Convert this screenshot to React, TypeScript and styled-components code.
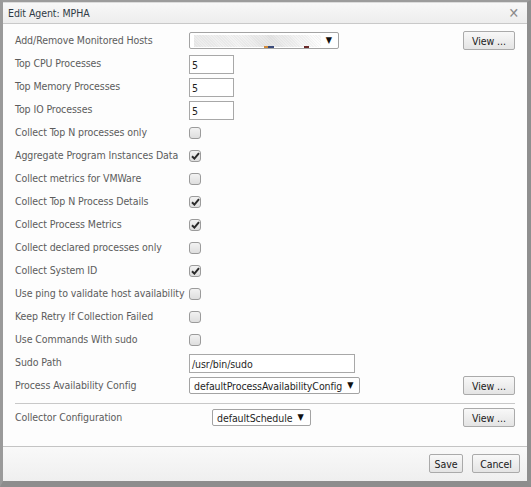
import React from "react";
import styled, { createGlobalStyle } from "styled-components";

const Global = createGlobalStyle`
  html, body { margin: 0; padding: 0; background: #ffffff; }
  * { box-sizing: border-box; }
`;

const FONT = `"DejaVu Sans Condensed", "DejaVu Sans", "Liberation Sans", sans-serif`;

const Dialog = styled.div`
  width: 531px;
  height: 487px;
  display: flex;
  flex-direction: column;
  border-top: 2px solid #9c9c9c;
  border-left: 3px solid #9a9a9a;
  border-right: 4px solid #8f8f8f;
  border-bottom: 6px solid #8d8d8d;
  background: #fdfdfd;
  font-family: ${FONT};
  font-size: 10.5px;
  letter-spacing: -0.08px;
`;

const TitleBar = styled.div`
  height: 22px;
  flex: none;
  display: flex;
  align-items: center;
  justify-content: space-between;
  padding: 0 8px 0 5px;
  background: linear-gradient(#f8f8f8, #ededed);
  border-bottom: 1px solid #c9c9c9;
  border-top: 1px solid #dcdcdc;
  color: #2f3a45;
`;

const Close = styled.span`
  color: #8a8a8a;
  font-size: 14px;
  line-height: 1;
  margin-top: -1px;
`;

const Body = styled.div`
  flex: 1;
  padding: 5px 12px 0 12px;
  display: flex;
  flex-direction: column;
`;

const Row = styled.div<{ $label?: number }>`
  height: 23px;
  display: grid;
  grid-template-columns: ${(p) => p.$label ?? 174}px 1fr auto;
  align-items: center;
`;

const Label = styled.span`
  color: #5c5c5c;
  white-space: nowrap;
  margin-top: -2px;
`;

const Cell = styled.div`
  display: flex;
  align-items: center;
`;

const TextInput = styled.div<{ $w: number }>`
  width: ${(p) => p.$w}px;
  height: 19px;
  border: 1px solid #a8a8a8;
  background: #fff;
  color: #1f1f1f;
  padding: 0 2px;
  display: flex;
  align-items: center;
  margin-top: 2px;
`;

const Select = styled.div<{ $w?: number }>`
  ${(p) => (p.$w ? `width: ${p.$w}px;` : "")}
  height: 17px;
  border: 1px solid #a3a3a3;
  border-radius: 2px;
  background: #fff;
  color: #1f1f1f;
  display: flex;
  align-items: center;
  padding: 0 6px 0 4px;
  gap: 5px;
`;

const Arrow = styled.span`
  font-size: 9px;
  color: #111;
  margin-left: auto;
  margin-top: -2px;
`;

const Redacted = styled.div`
  position: relative;
  width: 132px;
  height: 12px;
  background:
    repeating-linear-gradient(45deg, rgba(0,0,0,0.03) 0 1px, transparent 1px 2px),
    linear-gradient(90deg, #ececec, #f3f3f3 35%, #e6e6e6 60%, #f6f6f6 85%, #fdfdfd);
`;

const Mark = styled.span<{ $x: number; $w: number; $c: string }>`
  position: absolute;
  bottom: -1px;
  left: ${(p) => p.$x}px;
  width: ${(p) => p.$w}px;
  height: 2px;
  background: ${(p) => p.$c};
`;

const Check = styled.div`
  width: 12px;
  height: 12px;
  border: 1px solid #9b9b9b;
  border-radius: 3px;
  background: linear-gradient(#f2f2f2, #dedede);
  display: flex;
  align-items: center;
  justify-content: center;
`;

const Button = styled.div<{ $w: number }>`
  width: ${(p) => p.$w}px;
  height: 19px;
  border: 1px solid #aaaaaa;
  border-radius: 2px;
  background: linear-gradient(#f8f8f8, #e4e4e4);
  color: #202020;
  display: flex;
  align-items: center;
  justify-content: center;
`;

const Separator = styled.div`
  height: 1px;
  background: #c8c8c8;
  margin: 6px 0 2px;
`;

const Footer = styled.div`
  height: 35px;
  flex: none;
  border-top: 1px solid #c4c4c4;
  background: linear-gradient(#f9f9f9, #efefef);
  display: flex;
  align-items: center;
  justify-content: flex-end;
  gap: 9px;
  padding: 0 7px 1px 0;
`;

const Tick = () => (
  <svg width="9" height="8" viewBox="0 0 9 8">
    <path d="M1 4.2 L3.4 6.6 L8 1.2" stroke="#2b2b2b" strokeWidth="2" fill="none" />
  </svg>
);

const checks: [string, boolean][] = [
  ["Collect Top N processes only", false],
  ["Aggregate Program Instances Data", true],
  ["Collect metrics for VMWare", false],
  ["Collect Top N Process Details", true],
  ["Collect Process Metrics", true],
  ["Collect declared processes only", false],
  ["Collect System ID", true],
  ["Use ping to validate host availability", false],
  ["Keep Retry If Collection Failed", false],
  ["Use Commands With sudo", false],
];

export default function App() {
  return (
    <>
      <Global />
      <Dialog>
        <TitleBar>
          <span>Edit Agent: MPHA</span>
          <Close>✕</Close>
        </TitleBar>
        <Body>
          <Row>
            <Label>Add/Remove Monitored Hosts</Label>
            <Cell>
              <Select $w={150}>
                <Redacted>
                  <Mark $x={70} $w={4} $c="#d08a3a" />
                  <Mark $x={74} $w={6} $c="#3a4a7a" />
                  <Mark $x={110} $w={5} $c="#6a2a2a" />
                </Redacted>
                <Arrow>▼</Arrow>
              </Select>
            </Cell>
            <Button $w={52}>View ...</Button>
          </Row>
          {["Top CPU Processes", "Top Memory Processes", "Top IO Processes"].map((l) => (
            <Row key={l}>
              <Label>{l}</Label>
              <Cell>
                <TextInput $w={45}>5</TextInput>
              </Cell>
            </Row>
          ))}
          {checks.map(([l, c]) => (
            <Row key={l}>
              <Label>{l}</Label>
              <Cell>
                <Check>{c && <Tick />}</Check>
              </Cell>
            </Row>
          ))}
          <Row>
            <Label>Sudo Path</Label>
            <Cell>
              <TextInput $w={166}>/usr/bin/sudo</TextInput>
            </Cell>
          </Row>
          <Row>
            <Label>Process Availability Config</Label>
            <Cell>
              <Select>
                <span>defaultProcessAvailabilityConfig</span>
                <Arrow>▼</Arrow>
              </Select>
            </Cell>
            <Button $w={52}>View ...</Button>
          </Row>
          <Separator />
          <Row $label={197}>
            <Label>Collector Configuration</Label>
            <Cell>
              <Select>
                <span>defaultSchedule</span>
                <Arrow>▼</Arrow>
              </Select>
            </Cell>
            <Button $w={52}>View ...</Button>
          </Row>
        </Body>
        <Footer>
          <Button $w={34}>Save</Button>
          <Button $w={48}>Cancel</Button>
        </Footer>
      </Dialog>
    </>
  );
}
